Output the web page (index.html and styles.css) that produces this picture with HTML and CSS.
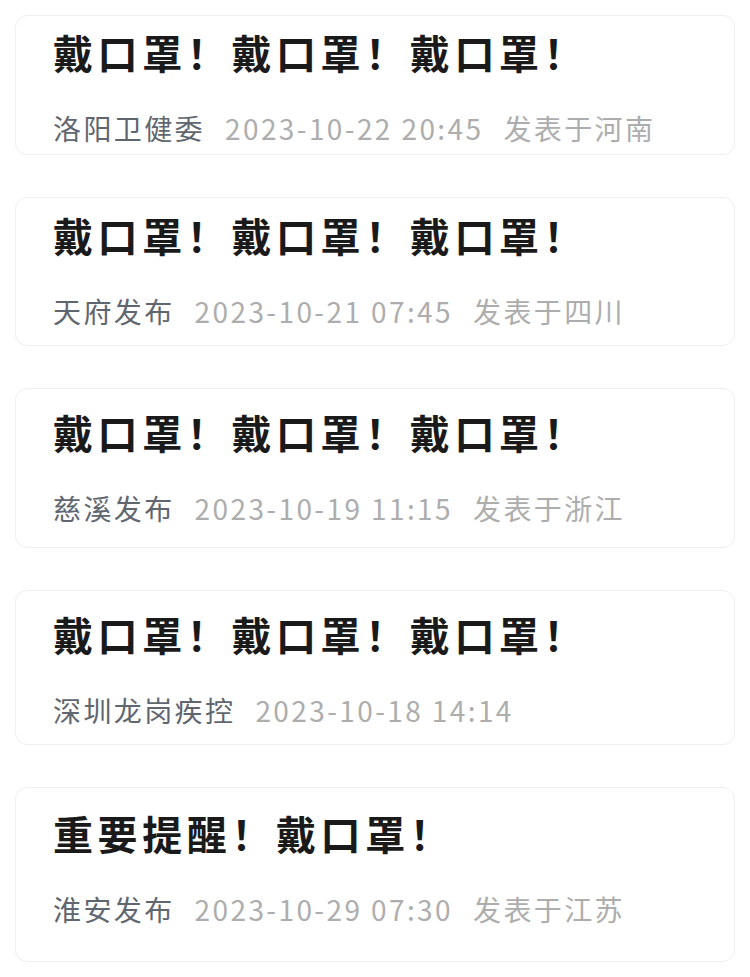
FILE: index.html
```html
<!DOCTYPE html>
<html lang="zh-CN">
<head>
    <meta charset="UTF-8">
    <meta name="viewport" content="width=device-width, initial-scale=1.0">
    <title>戴口罩</title>
    <link rel="stylesheet" href="styles.css">
</head>
<body>
    <main class="feed">
        <article class="card card-1">
            <h2 class="title">戴口罩！戴口罩！戴口罩！</h2>
            <div class="meta">
                <span class="author">洛阳卫健委</span>
                <span class="time">2023-10-22 20:45</span>
                <span class="place">发表于河南</span>
            </div>
        </article>

        <article class="card card-2">
            <h2 class="title">戴口罩！戴口罩！戴口罩！</h2>
            <div class="meta">
                <span class="author">天府发布</span>
                <span class="time">2023-10-21 07:45</span>
                <span class="place">发表于四川</span>
            </div>
        </article>

        <article class="card card-3">
            <h2 class="title">戴口罩！戴口罩！戴口罩！</h2>
            <div class="meta">
                <span class="author">慈溪发布</span>
                <span class="time">2023-10-19 11:15</span>
                <span class="place">发表于浙江</span>
            </div>
        </article>

        <article class="card card-4">
            <h2 class="title">戴口罩！戴口罩！戴口罩！</h2>
            <div class="meta">
                <span class="author">深圳龙岗疾控</span>
                <span class="time">2023-10-18 14:14</span>
            </div>
        </article>

        <article class="card card-5">
            <h2 class="title">重要提醒！戴口罩！</h2>
            <div class="meta">
                <span class="author">淮安发布</span>
                <span class="time">2023-10-29 07:30</span>
                <span class="place">发表于江苏</span>
            </div>
        </article>
    </main>
</body>
</html>
```

FILE: styles.css
```css
body {
    margin: 0;
    background: #ffffff;
    font-family: "Noto Sans CJK SC", "Noto Sans", sans-serif;
    color: #1a1a1a;
}

.feed {
    display: flex;
    flex-direction: column;
    gap: 42px;
    padding: 15px 15px 14px;
}

.card {
    border: 1px solid #efefef;
    border-radius: 12px;
    background: #fff;
    padding: 16px 20px 11px 37px;
}

/* each card came from a different capture, so the spacing differs a little */
.card-1 { padding-top: 14px; padding-bottom: 10px; }
.card-2 { padding-top: 15px; padding-bottom: 18px; }
.card-3 { padding-top: 21px; padding-bottom: 23px; }
.card-4 { padding-top: 21px; padding-bottom: 18px; }
.card-5 { padding-top: 23px; padding-bottom: 36px; }

.title {
    margin: 0;
    font-size: 40px;
    line-height: 44px;
    font-weight: 700;
    letter-spacing: 4.6px;
    color: #1a1a1a;
}

.meta {
    display: flex;
    gap: 20px;
    margin-top: 38px;
    font-size: 28px;
    line-height: 32px;
    letter-spacing: 2.4px;
    white-space: nowrap;
}

.author {
    color: #5f6670;
}

.time,
.place {
    color: #adadad;
}
```
